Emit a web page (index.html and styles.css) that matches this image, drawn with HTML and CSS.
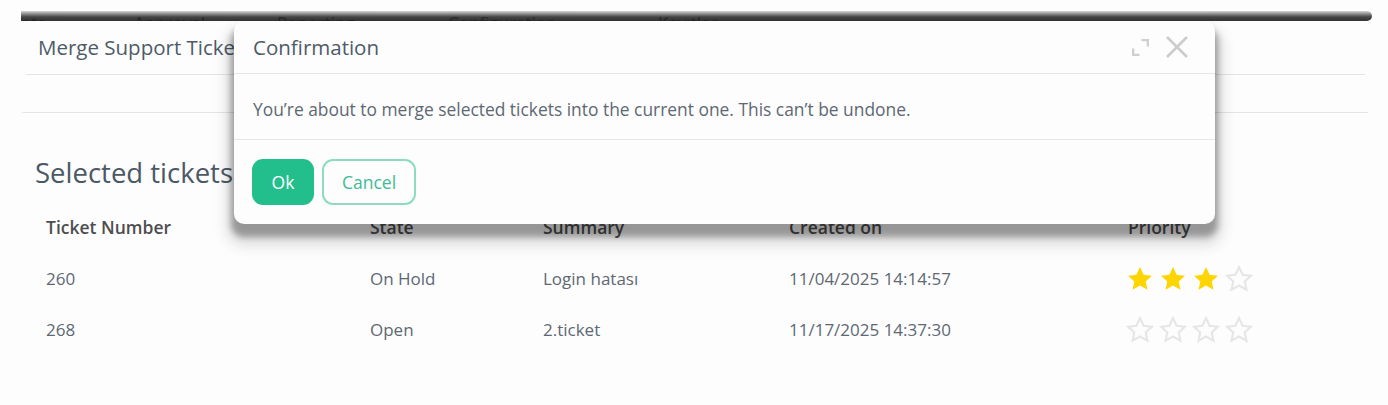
FILE: index.html
```html
<!DOCTYPE html>
<html lang="en">
<head>
<meta charset="utf-8">
<title>Merge Support Ticket</title>
<link rel="stylesheet" href="styles.css">
</head>
<body>
<div class="topbar">
  <span class="nav-item n1">ote ⌄</span>
  <span class="nav-item n2">Approval ⌄</span>
  <span class="nav-item n3">Reporting ⌄</span>
  <span class="nav-item n4">Configuration ⌄</span>
  <span class="nav-item n5">Kayıtlar</span>
</div>
<main class="page">
  <div class="panel-head">Merge Support Ticket</div>
  <div class="toolbar"></div>
  <h2 class="section-title">Selected tickets</h2>
  <div class="grid">
    <div class="row head">
      <div>Ticket Number</div><div>State</div><div>Summary</div><div>Created on</div><div>Priority</div>
    </div>
    <div class="row">
      <div>260</div><div>On Hold</div><div>Login hatası</div><div>11/04/2025 14:14:57</div>
      <div class="stars">
        <svg class="star on" viewBox="0 0 24 24"><path d="M12 1.8l3.1 6.6 7.1.8-5.3 4.9 1.5 7.1L12 17.6l-6.4 3.6 1.5-7.1L1.8 9.2l7.1-.8z"/></svg>
        <svg class="star on" viewBox="0 0 24 24"><path d="M12 1.8l3.1 6.6 7.1.8-5.3 4.9 1.5 7.1L12 17.6l-6.4 3.6 1.5-7.1L1.8 9.2l7.1-.8z"/></svg>
        <svg class="star on" viewBox="0 0 24 24"><path d="M12 1.8l3.1 6.6 7.1.8-5.3 4.9 1.5 7.1L12 17.6l-6.4 3.6 1.5-7.1L1.8 9.2l7.1-.8z"/></svg>
        <svg class="star off" viewBox="0 0 24 24"><path d="M12 1.8l3.1 6.6 7.1.8-5.3 4.9 1.5 7.1L12 17.6l-6.4 3.6 1.5-7.1L1.8 9.2l7.1-.8z"/></svg>
      </div>
    </div>
    <div class="row">
      <div>268</div><div>Open</div><div>2.ticket</div><div>11/17/2025 14:37:30</div>
      <div class="stars">
        <svg class="star off" viewBox="0 0 24 24"><path d="M12 1.8l3.1 6.6 7.1.8-5.3 4.9 1.5 7.1L12 17.6l-6.4 3.6 1.5-7.1L1.8 9.2l7.1-.8z"/></svg>
        <svg class="star off" viewBox="0 0 24 24"><path d="M12 1.8l3.1 6.6 7.1.8-5.3 4.9 1.5 7.1L12 17.6l-6.4 3.6 1.5-7.1L1.8 9.2l7.1-.8z"/></svg>
        <svg class="star off" viewBox="0 0 24 24"><path d="M12 1.8l3.1 6.6 7.1.8-5.3 4.9 1.5 7.1L12 17.6l-6.4 3.6 1.5-7.1L1.8 9.2l7.1-.8z"/></svg>
        <svg class="star off" viewBox="0 0 24 24"><path d="M12 1.8l3.1 6.6 7.1.8-5.3 4.9 1.5 7.1L12 17.6l-6.4 3.6 1.5-7.1L1.8 9.2l7.1-.8z"/></svg>
      </div>
    </div>
  </div>
</main>

<div class="dialog" role="dialog">
  <div class="dlg-head">
    <span class="dlg-title">Confirmation</span>
    <div class="dlg-icons">
      <svg class="ico-expand" viewBox="0 0 20 20"><path d="M11 3h6v6M9 17H3v-6" fill="none" stroke="#cfcfcf" stroke-width="2.2"/></svg>
      <svg class="ico-close" viewBox="0 0 24 24"><path d="M2 2l20 20M22 2L2 22" fill="none" stroke="#cccccc" stroke-width="2.6"/></svg>
    </div>
  </div>
  <div class="dlg-body">You’re about to merge selected tickets into the current one. This can’t be undone.</div>
  <div class="dlg-foot">
    <button class="btn ok">Ok</button>
    <button class="btn cancel">Cancel</button>
  </div>
</div>
</body>
</html>
```

FILE: styles.css
```css
* { box-sizing: border-box; }
html, body { margin: 0; padding: 0; background: #fdfdfd; }
body {
  font-family: "Open Sans", "Noto Sans", sans-serif;
  color: #5b6670;
  width: 1388px;
  height: 405px;
  overflow: hidden;
}

.topbar {
  margin: 11px 16px 0 21px;
  height: 10px;
  overflow: hidden;
  position: relative;
  background: linear-gradient(#d8d8d8 0%, #8a8a8a 30%, #454545 60%, #333333 100%);
  border-radius: 0 5px 5px 0;
  white-space: nowrap;
}
.nav-item {
  position: absolute;
  top: 1px;
  font-size: 17px;
  line-height: 22px;
  color: #1e1e1e;
  opacity: 0.75;
}
.n1 { left: 0; }
.n2 { left: 113px; }
.n3 { left: 256px; }
.n4 { left: 427px; }
.n5 { left: 637px; }

.page { padding: 0 20px 0 22px; }
.panel-head {
  margin-left: 4px;
  margin-right: 3px;
  height: 54px;
  border-bottom: 1px solid #e4e4e4;
  padding-left: 12px;
  font-size: 20.5px;
  line-height: 52px;
  color: #4d5b68;
  white-space: nowrap;
}
.toolbar {
  height: 38px;
  border-bottom: 1px solid #e4e4e4;
}
.section-title {
  margin: 0;
  padding: 40px 0 0 13px;
  font-weight: 400;
  font-size: 27.5px;
  line-height: 40px;
  color: #4b5966;
}
.grid { margin-top: 20px; }
.row {
  display: grid;
  grid-template-columns: 324px 173px 246px 339px 1fr;
  padding-left: 24px;
  height: 51px;
  align-items: center;
  font-size: 17px;
  color: #5d6873;
}
.row.head {
  height: 28px;
  font-weight: 600;
  font-size: 17.5px;
  color: #4e4e4e;
  margin-bottom: 12px;
}
.stars { display: flex; gap: 5px; margin-left: -2px; }
.star { width: 28px; height: 28px; }
.star.on path { fill: #ffd500; }
.star.off path { fill: none; stroke: #e6e6e6; stroke-width: 1.8; }

.dialog {
  position: absolute;
  left: 234px;
  top: 21px;
  width: 981px;
  height: 203px;
  background: #fdfdfd;
  border-radius: 10px;
  box-shadow: 0 10px 6px 3px rgba(0,0,0,0.32), 0 14px 14px 8px rgba(0,0,0,0.12);
}
.dlg-head {
  height: 53px;
  border-bottom: 1px solid #e6e6e6;
  display: flex;
  align-items: center;
  justify-content: space-between;
  padding: 0 26px 0 19px;
}
.dlg-title { font-size: 20.5px; color: #4d5b68; }
.dlg-icons { display: flex; align-items: center; gap: 14px; }
.ico-expand { width: 21px; height: 21px; }
.ico-close { width: 24px; height: 24px; }
.dlg-body {
  height: 66px;
  border-bottom: 1px solid #e6e6e6;
  padding: 0 19px;
  font-size: 17.4px;
  line-height: 70px;
  color: #5d6873;
  white-space: nowrap;
}
.dlg-foot {
  display: flex;
  gap: 8px;
  padding: 19px 18px;
}
.btn {
  font-family: inherit;
  height: 46px;
  border-radius: 11px;
  font-size: 17.5px;
  cursor: pointer;
}
.btn.ok {
  width: 62px;
  background: #22bf8d;
  border: 0;
  color: #ffffff;
}
.btn.cancel {
  width: 94px;
  background: #fdfdfd;
  border: 2px solid #8fdbc2;
  color: #3fbc95;
}
```
